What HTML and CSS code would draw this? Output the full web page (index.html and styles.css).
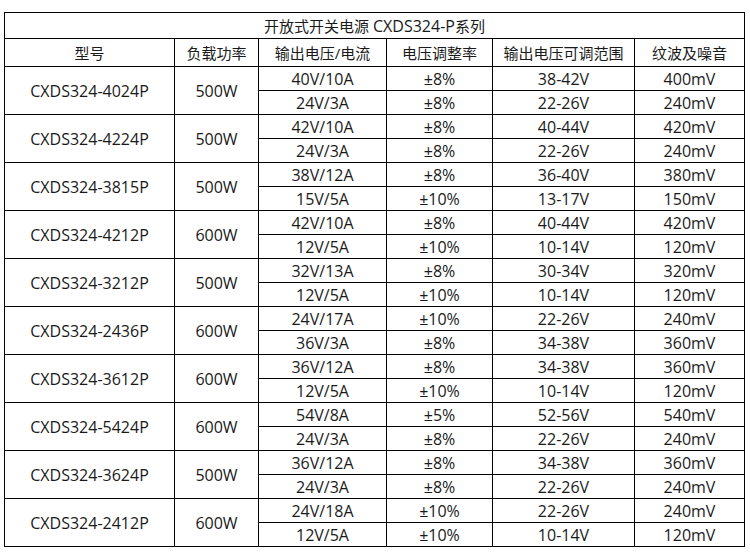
FILE: index.html
```html
<!DOCTYPE html>
<html lang="zh-CN">
<head>
<meta charset="utf-8">
<title>开放式开关电源 CXDS324-P系列</title>
<link rel="stylesheet" href="styles.css">
</head>
<body>
<table class="spec">
  <colgroup>
    <col class="c1"><col class="c2"><col class="c3"><col class="c4"><col class="c5"><col class="c6">
  </colgroup>
  <tr class="title"><td colspan="6">开放式开关电源 <span class="lat">CXDS324-P</span>系列</td></tr>
  <tr class="head">
    <td>型号</td><td>负载功率</td><td>输出电压/电流</td><td>电压调整率</td><td>输出电压可调范围</td><td>纹波及噪音</td>
  </tr>
  <tr><td rowspan="2">CXDS324-4024P</td><td rowspan="2">500W</td><td>40V/10A</td><td>±8%</td><td>38-42V</td><td>400mV</td></tr>
  <tr><td>24V/3A</td><td>±8%</td><td>22-26V</td><td>240mV</td></tr>
  <tr><td rowspan="2">CXDS324-4224P</td><td rowspan="2">500W</td><td>42V/10A</td><td>±8%</td><td>40-44V</td><td>420mV</td></tr>
  <tr><td>24V/3A</td><td>±8%</td><td>22-26V</td><td>240mV</td></tr>
  <tr><td rowspan="2">CXDS324-3815P</td><td rowspan="2">500W</td><td>38V/12A</td><td>±8%</td><td>36-40V</td><td>380mV</td></tr>
  <tr><td>15V/5A</td><td>±10%</td><td>13-17V</td><td>150mV</td></tr>
  <tr><td rowspan="2">CXDS324-4212P</td><td rowspan="2">600W</td><td>42V/10A</td><td>±8%</td><td>40-44V</td><td>420mV</td></tr>
  <tr><td>12V/5A</td><td>±10%</td><td>10-14V</td><td>120mV</td></tr>
  <tr><td rowspan="2">CXDS324-3212P</td><td rowspan="2">500W</td><td>32V/13A</td><td>±8%</td><td>30-34V</td><td>320mV</td></tr>
  <tr><td>12V/5A</td><td>±10%</td><td>10-14V</td><td>120mV</td></tr>
  <tr><td rowspan="2">CXDS324-2436P</td><td rowspan="2">600W</td><td>24V/17A</td><td>±10%</td><td>22-26V</td><td>240mV</td></tr>
  <tr><td>36V/3A</td><td>±8%</td><td>34-38V</td><td>360mV</td></tr>
  <tr><td rowspan="2">CXDS324-3612P</td><td rowspan="2">600W</td><td>36V/12A</td><td>±8%</td><td>34-38V</td><td>360mV</td></tr>
  <tr><td>12V/5A</td><td>±10%</td><td>10-14V</td><td>120mV</td></tr>
  <tr><td rowspan="2">CXDS324-5424P</td><td rowspan="2">600W</td><td>54V/8A</td><td>±5%</td><td>52-56V</td><td>540mV</td></tr>
  <tr><td>24V/3A</td><td>±8%</td><td>22-26V</td><td>240mV</td></tr>
  <tr><td rowspan="2">CXDS324-3624P</td><td rowspan="2">500W</td><td>36V/12A</td><td>±8%</td><td>34-38V</td><td>360mV</td></tr>
  <tr><td>24V/3A</td><td>±8%</td><td>22-26V</td><td>240mV</td></tr>
  <tr><td rowspan="2">CXDS324-2412P</td><td rowspan="2">600W</td><td>24V/18A</td><td>±10%</td><td>22-26V</td><td>240mV</td></tr>
  <tr><td>12V/5A</td><td>±10%</td><td>10-14V</td><td>120mV</td></tr>
</table>
</body>
</html>
```

FILE: styles.css
```css
html, body {
  margin: 0;
  padding: 0;
  background: #ffffff;
}
body {
  padding: 12px 0 0 4px;
  font-family: "Open Sans", "Noto Sans CJK SC", sans-serif;
  font-size: 16px;
  color: #1a1a1a;
}
.spec {
  border-collapse: collapse;
  table-layout: fixed;
  width: 740px;
}
.c1 { width: 170px; }
.c2 { width: 84px; }
.c3 { width: 128px; }
.c4 { width: 106px; }
.c5 { width: 142px; }
.c6 { width: 110px; }
.spec td {
  border: 1px solid #000000;
  padding: 0;
  height: 23px;
  text-align: center;
  vertical-align: middle;
  line-height: 20px;
  white-space: nowrap;
}
.spec .title td {
  height: 25px;
  font-size: 15px;
}
.spec .title .lat {
  font-size: 16px;
}
.spec .head td {
  height: 27px;
  font-size: 15px;
}
```
